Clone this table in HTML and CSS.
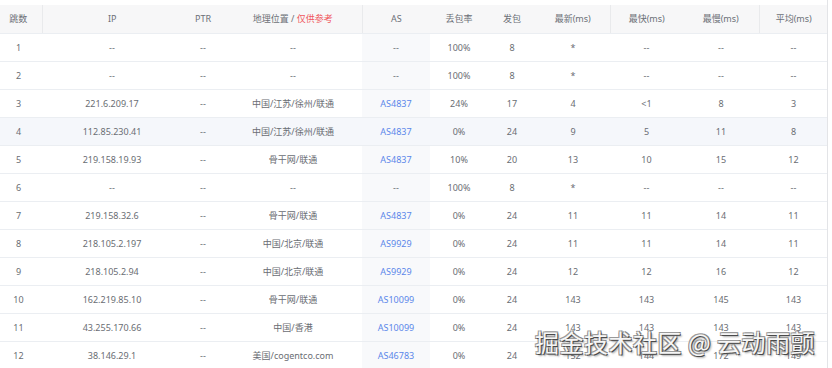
FILE: index.html
```html
<!DOCTYPE html>
<html lang="zh-CN">
<head>
<meta charset="utf-8">
<title>Traceroute</title>
<link rel="stylesheet" href="styles.css">
</head>
<body>
<div class="wrap">
  <table class="trace">
    <colgroup>
      <col class="c-hop"><col class="c-ip"><col class="c-ptr"><col class="c-geo"><col class="c-as">
      <col class="c-loss"><col class="c-sent"><col class="c-last"><col class="c-best"><col class="c-worst"><col class="c-avg">
    </colgroup>
    <thead>
      <tr>
        <th class="hop div">跳数</th>
        <th>IP</th>
        <th>PTR</th>
        <th class="div">地理位置 / <span class="warn">仅供参考</span></th>
        <th>AS</th>
        <th>丢包率</th>
        <th>发包</th>
        <th class="div">最新(ms)</th>
        <th>最快(ms)</th>
        <th class="div">最慢(ms)</th>
        <th>平均(ms)</th>
      </tr>
    </thead>
    <tbody>
      <tr><td class="hop">1</td><td>--</td><td>--</td><td>--</td><td class="as">--</td><td>100%</td><td>8</td><td>*</td><td>--</td><td>--</td><td>--</td></tr>
      <tr><td class="hop">2</td><td>--</td><td>--</td><td>--</td><td class="as">--</td><td>100%</td><td>8</td><td>*</td><td>--</td><td>--</td><td>--</td></tr>
      <tr><td class="hop">3</td><td>221.6.209.17</td><td>--</td><td>中国/江苏/徐州/联通</td><td class="as"><a>AS4837</a></td><td>24%</td><td>17</td><td>4</td><td>&lt;1</td><td>8</td><td>3</td></tr>
      <tr class="hover"><td class="hop">4</td><td>112.85.230.41</td><td>--</td><td>中国/江苏/徐州/联通</td><td class="as"><a>AS4837</a></td><td>0%</td><td>24</td><td>9</td><td>5</td><td>11</td><td>8</td></tr>
      <tr><td class="hop">5</td><td>219.158.19.93</td><td>--</td><td>骨干网/联通</td><td class="as"><a>AS4837</a></td><td>10%</td><td>20</td><td>13</td><td>10</td><td>15</td><td>12</td></tr>
      <tr><td class="hop">6</td><td>--</td><td>--</td><td>--</td><td class="as">--</td><td>100%</td><td>8</td><td>*</td><td>--</td><td>--</td><td>--</td></tr>
      <tr><td class="hop">7</td><td>219.158.32.6</td><td>--</td><td>骨干网/联通</td><td class="as"><a>AS4837</a></td><td>0%</td><td>24</td><td>11</td><td>11</td><td>14</td><td>11</td></tr>
      <tr><td class="hop">8</td><td>218.105.2.197</td><td>--</td><td>中国/北京/联通</td><td class="as"><a>AS9929</a></td><td>0%</td><td>24</td><td>11</td><td>11</td><td>14</td><td>11</td></tr>
      <tr><td class="hop">9</td><td>218.105.2.94</td><td>--</td><td>中国/北京/联通</td><td class="as"><a>AS9929</a></td><td>0%</td><td>24</td><td>12</td><td>12</td><td>16</td><td>12</td></tr>
      <tr><td class="hop">10</td><td>162.219.85.10</td><td>--</td><td>骨干网/联通</td><td class="as"><a>AS10099</a></td><td>0%</td><td>24</td><td>143</td><td>143</td><td>145</td><td>143</td></tr>
      <tr><td class="hop">11</td><td>43.255.170.66</td><td>--</td><td>中国/香港</td><td class="as"><a>AS10099</a></td><td>0%</td><td>24</td><td>143</td><td>143</td><td>143</td><td>143</td></tr>
      <tr><td class="hop">12</td><td>38.146.29.1</td><td>--</td><td>美国/cogentco.com</td><td class="as"><a>AS46783</a></td><td>0%</td><td>24</td><td>152</td><td>144</td><td>172</td><td>149</td></tr>
    </tbody>
  </table>
  <div class="watermark">掘金技术社区 @ 云动雨颤</div>
</div>
</body>
</html>
```
FILE: styles.css
```css
html, body {
  margin: 0;
  padding: 0;
  background: #fff;
}
body {
  font-family: "Noto Sans", "Noto Sans CJK SC", sans-serif;
  font-size: 9px;
  color: #6a6d73;
}
.wrap {
  position: relative;
  width: 828px;
  height: 368px;
  padding-top: 5px;
  box-sizing: border-box;
  border-right: 1px solid #e3e4e7;
  overflow: hidden;
}
.trace {
  width: 828px;
  table-layout: fixed;
  border-collapse: collapse;
}
.c-hop { width: 42px; }
.c-ip { width: 140px; }
.c-ptr { width: 42px; }
.c-geo { width: 138px; }
.c-as { width: 68px; }
.c-loss { width: 58px; }
.c-sent { width: 48px; }
.c-last { width: 74px; }
.c-best { width: 73px; }
.c-worst { width: 76px; }
.c-avg { width: 69px; }
th, td {
  padding: 0;
  text-align: center;
  white-space: nowrap;
  border-bottom: 1px solid #ebeef2;
}
thead tr { height: 28px; }
tbody tr { height: 28px; }
th {
  background: #f7f7f8;
  font-weight: normal;
  color: #6c7077;
}
th.div { border-right: 1px solid #e9eaec; }
.hop { padding-right: 5px; }
.warn { color: #f0585f; }
td.as { background: #f8f9fb; }
td.as a { color: #5b87ea; text-decoration: none; }
tr.hover td { background: #f5f7fb; }
.watermark {
  position: absolute;
  right: 12px;
  bottom: 12px;
  font-family: "Noto Sans CJK SC", sans-serif;
  font-size: 24px;
  line-height: 28px;
  color: #f6f6f6;
  letter-spacing: 0.5px;
  text-shadow: 1px 1px 0 #4a4a4a, -1px -1px 0 #9a9a9a, 1px -1px 0 #888, -1px 1px 0 #888, 2px 2px 2px rgba(0,0,0,0.35);
}
```
